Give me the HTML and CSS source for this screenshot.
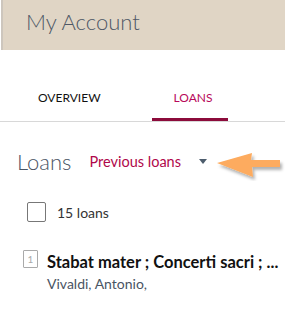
FILE: index.html
```html
<!DOCTYPE html>
<html lang="en">
<head>
  <meta charset="UTF-8">
  <title>My Account</title>
  <link rel="stylesheet" href="styles.css">
</head>
<body>
  <div class="page-header">
    <h1>My Account</h1>
  </div>

  <div class="tabs">
    <a class="tab">OVERVIEW</a>
    <a class="tab active">LOANS</a>
  </div>

  <div class="loans-head">
    <h2>Loans</h2>
    <span class="loans-select">Previous loans</span>
    <span class="caret"></span>
  </div>

  <!-- annotation arrow -->
  <svg class="pointer" width="72" height="34" viewBox="0 0 72 34">
    <defs>
      <filter id="sh" x="-20%" y="-20%" width="150%" height="160%">
        <feDropShadow dx="2" dy="3" stdDeviation="1.5" flood-color="#000" flood-opacity="0.3"/>
      </filter>
    </defs>
    <path d="M4 16 L39 6 L38 13 L67 13 L67 20 L39 20 L40 30 Z" fill="#fdab5e" filter="url(#sh)"/>
  </svg>

  <label class="select-all">
    <span class="checkbox"></span>
    <span>15 loans</span>
  </label>

  <div class="loan">
    <span class="num">1</span>
    <div>
      <div class="loan-title">Stabat mater ; Concerti sacri ; ...</div>
      <div class="loan-author">Vivaldi, Antonio,</div>
    </div>
  </div>
</body>
</html>
```

FILE: styles.css
```css
body {
  margin: 0;
  font-family: Lato, 'Open Sans', sans-serif;
  background: white;
  color: #222;
  position: relative;
  overflow: hidden;
}
.page-header {
  margin-left: 1px;
  border-left: 2px solid #cdc6bd;
  background: #e0d5c5;
  height: 50px;
  box-sizing: border-box;
  display: flex;
  align-items: center;
  padding: 0 0 7px 23px;
}
.page-header h1 {
  margin: 0;
  font-size: 22px;
  font-weight: 300;
  color: #4f5866;
}
.tabs {
  display: flex;
  gap: 36px;
  margin-top: 30px;
  padding-left: 16px;
  border-bottom: 1px solid #d8d8d8;
}
.tab {
  padding: 10px 15px 13px 22px;
  font-size: 12px;
  color: #111;
  border-bottom: 3px solid transparent;
}
.tab.active {
  color: #b8085a;
  border-bottom-color: #8c0b3b;
}
.loans-head {
  display: flex;
  align-items: center;
  padding: 26px 0 0 17px;
}
.loans-head h2 {
  margin: 0;
  font-size: 22px;
  font-weight: 300;
  color: #4a5463;
}
.loans-select {
  margin-left: 18px;
  font-size: 14.5px;
  color: #b0074a;
}
.caret {
  margin-left: 18px;
  width: 0;
  height: 0;
  border-left: 4px solid transparent;
  border-right: 4px solid transparent;
  border-top: 5px solid #4d5d6d;
}
.pointer {
  position: absolute;
  left: 213px;
  top: 147px;
}
.select-all {
  display: flex;
  align-items: center;
  gap: 11px;
  margin: 27px 0 0 27px;
  font-size: 14px;
  color: #333;
}
.checkbox {
  width: 17px;
  height: 18px;
  border: 1px solid #777;
  border-radius: 2px;
}
.loan {
  display: flex;
  gap: 9px;
  margin: 28px 0 0 23px;
}
.num {
  width: 13px;
  height: 16px;
  border: 1px solid #aaa;
  border-radius: 1px;
  font-size: 10px;
  color: #aaa;
  text-align: center;
  line-height: 16px;
  flex-shrink: 0;
}
.loan-title {
  font-size: 16.5px;
  font-weight: bold;
  color: #111;
  margin-top: 2px;
  white-space: nowrap;
}
.loan-author {
  font-size: 14px;
  color: #4a5463;
  margin-top: 3px;
}
```
